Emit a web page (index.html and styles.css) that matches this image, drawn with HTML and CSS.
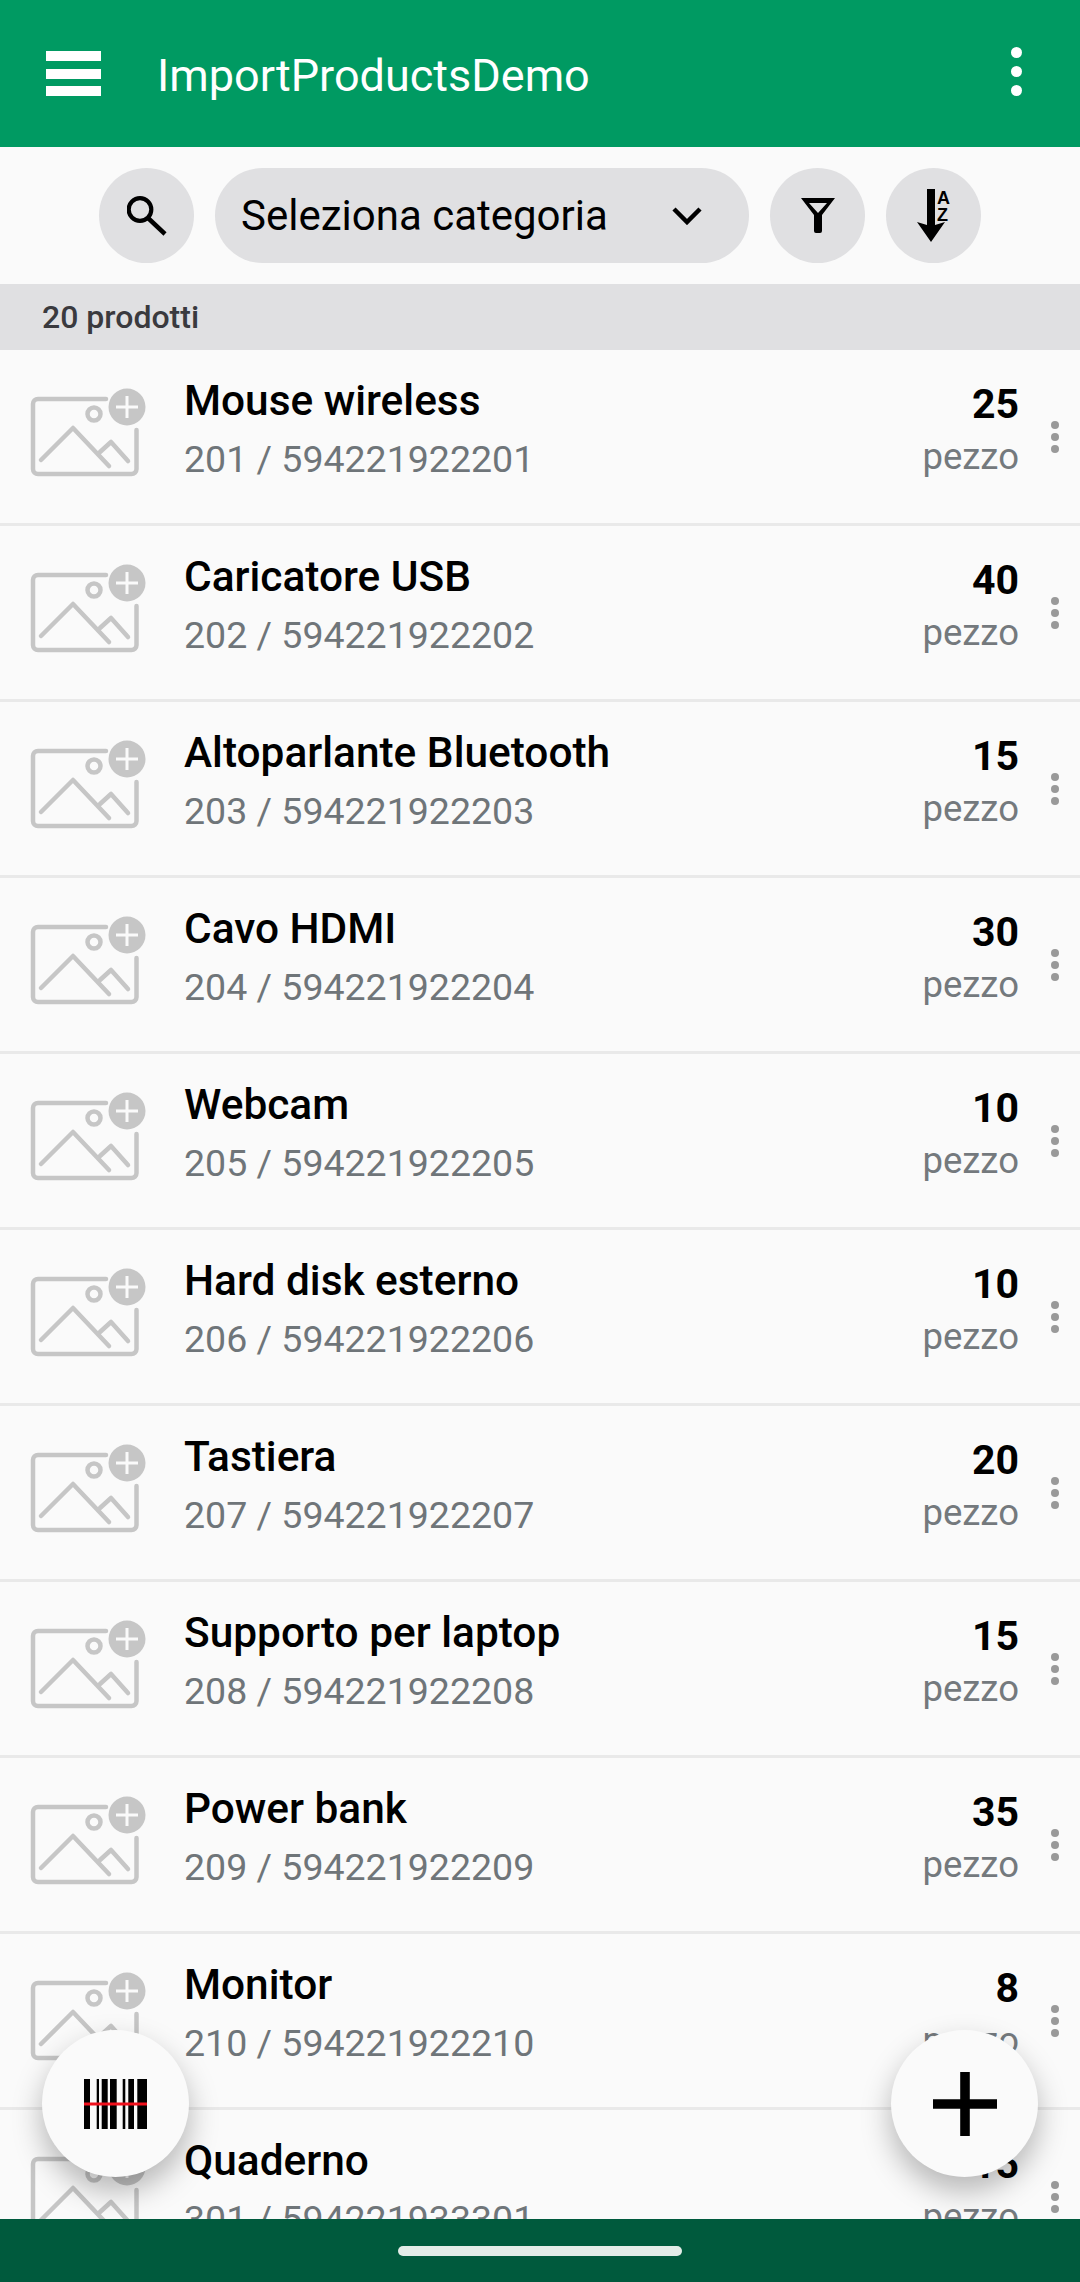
FILE: index.html
```html
<!DOCTYPE html>
<html lang="en">

<head>
    <meta charset="UTF-8">
    <title>ImportProductsDemo</title>
    <link rel="stylesheet" href="styles.css">
</head>

<body>
    <div class="screen">
        <!-- App bar -->
        <header class="appbar">
            <div class="hamburger"><span></span><span></span><span></span></div>
            <div class="app-title">ImportProductsDemo</div>
            <div class="kebab"><span></span><span></span><span></span></div>
        </header>

        <!-- Toolbar -->
        <div class="toolbar">
            <div class="round-btn">
                <svg width="40" height="40" viewBox="0 0 40 40">
                    <circle cx="13" cy="13.5" r="11.3" fill="none" stroke="#000" stroke-width="4.2" />
                    <path d="M21 22L38 38" stroke="#000" stroke-width="4.5" />
                </svg>
            </div>
            <div class="select-pill">
                <span>Seleziona categoria</span>
                <svg width="30" height="18" viewBox="0 0 30 18">
                    <path d="M2 2L15 15L28 2" fill="none" stroke="#000" stroke-width="4.5" />
                </svg>
            </div>
            <div class="round-btn">
                <svg width="36" height="36" viewBox="0 0 36 36">
                    <path d="M1 0H35L22 17V33q0 2-2 2H16q-2 0-2-2V17Z M9 5L18 15L27 5Z" fill="#000" fill-rule="evenodd" />
                </svg>
            </div>
            <div class="round-btn">
                <svg class="sort-icon" width="36" height="54" viewBox="0 0 36 54">
                    <path d="M10 0H18V36L28 33L14 53L0 33L10 36Z" fill="#000" />
                    <text x="20" y="15" class="az">A</text>
                    <text x="20" y="32" class="az">Z</text>
                </svg>
            </div>
        </div>

        <div class="count-bar">20 prodotti</div>

        <!-- Product list -->
        <div class="list">
            <div class="row">
                <svg class="thumb" viewBox="0 0 120 100"><use href="#ph" /></svg>
                <div class="info"><div class="name">Mouse wireless</div><div class="code">201 / 594221922201</div></div>
                <div class="stock"><div class="qty">25</div><div class="unit">pezzo</div></div>
                <div class="dots"><span></span><span></span><span></span></div>
            </div>
            <div class="row">
                <svg class="thumb" viewBox="0 0 120 100"><use href="#ph" /></svg>
                <div class="info"><div class="name">Caricatore USB</div><div class="code">202 / 594221922202</div></div>
                <div class="stock"><div class="qty">40</div><div class="unit">pezzo</div></div>
                <div class="dots"><span></span><span></span><span></span></div>
            </div>
            <div class="row">
                <svg class="thumb" viewBox="0 0 120 100"><use href="#ph" /></svg>
                <div class="info"><div class="name">Altoparlante Bluetooth</div><div class="code">203 / 594221922203</div></div>
                <div class="stock"><div class="qty">15</div><div class="unit">pezzo</div></div>
                <div class="dots"><span></span><span></span><span></span></div>
            </div>
            <div class="row">
                <svg class="thumb" viewBox="0 0 120 100"><use href="#ph" /></svg>
                <div class="info"><div class="name">Cavo HDMI</div><div class="code">204 / 594221922204</div></div>
                <div class="stock"><div class="qty">30</div><div class="unit">pezzo</div></div>
                <div class="dots"><span></span><span></span><span></span></div>
            </div>
            <div class="row">
                <svg class="thumb" viewBox="0 0 120 100"><use href="#ph" /></svg>
                <div class="info"><div class="name">Webcam</div><div class="code">205 / 594221922205</div></div>
                <div class="stock"><div class="qty">10</div><div class="unit">pezzo</div></div>
                <div class="dots"><span></span><span></span><span></span></div>
            </div>
            <div class="row">
                <svg class="thumb" viewBox="0 0 120 100"><use href="#ph" /></svg>
                <div class="info"><div class="name">Hard disk esterno</div><div class="code">206 / 594221922206</div></div>
                <div class="stock"><div class="qty">10</div><div class="unit">pezzo</div></div>
                <div class="dots"><span></span><span></span><span></span></div>
            </div>
            <div class="row">
                <svg class="thumb" viewBox="0 0 120 100"><use href="#ph" /></svg>
                <div class="info"><div class="name">Tastiera</div><div class="code">207 / 594221922207</div></div>
                <div class="stock"><div class="qty">20</div><div class="unit">pezzo</div></div>
                <div class="dots"><span></span><span></span><span></span></div>
            </div>
            <div class="row">
                <svg class="thumb" viewBox="0 0 120 100"><use href="#ph" /></svg>
                <div class="info"><div class="name">Supporto per laptop</div><div class="code">208 / 594221922208</div></div>
                <div class="stock"><div class="qty">15</div><div class="unit">pezzo</div></div>
                <div class="dots"><span></span><span></span><span></span></div>
            </div>
            <div class="row">
                <svg class="thumb" viewBox="0 0 120 100"><use href="#ph" /></svg>
                <div class="info"><div class="name">Power bank</div><div class="code">209 / 594221922209</div></div>
                <div class="stock"><div class="qty">35</div><div class="unit">pezzo</div></div>
                <div class="dots"><span></span><span></span><span></span></div>
            </div>
            <div class="row">
                <svg class="thumb" viewBox="0 0 120 100"><use href="#ph" /></svg>
                <div class="info"><div class="name">Monitor</div><div class="code">210 / 594221922210</div></div>
                <div class="stock"><div class="qty">8</div><div class="unit">pezzo</div></div>
                <div class="dots"><span></span><span></span><span></span></div>
            </div>
            <div class="row">
                <svg class="thumb" viewBox="0 0 120 100"><use href="#ph" /></svg>
                <div class="info"><div class="name">Quaderno</div><div class="code">301 / 594221933301</div></div>
                <div class="stock"><div class="qty">15</div><div class="unit">pezzo</div></div>
                <div class="dots"><span></span><span></span><span></span></div>
            </div>
        </div>

        <!-- Floating buttons -->
        <div class="fab fab-scan">
            <svg width="63" height="50" viewBox="0 0 63 50">
                <path d="M0 0H6V50H0Z M12.7 0H15V50H12.7Z M17.7 0H23.7V50H17.7Z M26 0H32.7V50H26Z M38.7 0H41.3V50H38.7Z M44.3 0H50V50H44.3Z M53.3 0H63V50H53.3Z" fill="#000" />
                <rect x="0" y="23.5" width="63" height="3" fill="#f0101c" />
            </svg>
        </div>
        <div class="fab fab-add">
            <svg width="64" height="64" viewBox="0 0 64 64">
                <path d="M27.2 0H36.8V27.2H64V36.8H36.8V64H27.2V36.8H0V27.2H27.2Z" fill="#000" />
            </svg>
        </div>

        <!-- Navigation bar -->
        <div class="navbar"><div class="home-pill"></div></div>
    </div>

    <!-- Shared image placeholder -->
    <svg class="defs" width="0" height="0">
        <symbol id="ph" viewBox="0 0 120 100">
            <path d="M78 14H10a5 5 0 0 0-5 5V84a5 5 0 0 0 5 5H103.5a5 5 0 0 0 5-5V45" fill="none" stroke="#c6c6c6" stroke-width="4.5" stroke-linecap="round" />
            <path d="M13 75L45 43L81 81M72 67L83 57L100 76" fill="none" stroke="#c6c6c6" stroke-width="4.5" stroke-linecap="round" stroke-linejoin="round" />
            <circle cx="66" cy="29" r="6.5" fill="none" stroke="#c6c6c6" stroke-width="4.5" />
            <circle cx="99" cy="22" r="18.5" fill="#c6c6c6" />
            <path d="M99 11V33M88 22H110" stroke="#fafafa" stroke-width="3" />
        </symbol>
    </svg>
</body>

</html>
```

FILE: styles.css
```css
/* Global Styles */

* {
    box-sizing: border-box;
    margin: 0;
    padding: 0;
}

body {
    font-family: Roboto, sans-serif;
    background-color: #fafafa;
}

.screen {
    position: relative;
    width: 1080px;
    height: 2282px;
    display: flex;
    flex-direction: column;
    overflow: hidden;
}

.defs {
    position: absolute;
}

/* App bar */

.appbar {
    height: 147px;
    flex-shrink: 0;
    background-color: #009a62;
    color: #ffffff;
    display: flex;
    align-items: center;
    padding: 0 58px 4px 46px;
}

.hamburger {
    width: 55px;
    height: 45px;
    margin-top: 4px;
    display: flex;
    flex-direction: column;
    justify-content: space-between;
}

.hamburger span {
    display: block;
    height: 10px;
    background-color: #ffffff;
}

.app-title {
    flex: 1;
    margin-left: 56px;
    padding-top: 8px;
    font-size: 45px;
}

.kebab {
    display: flex;
    flex-direction: column;
    gap: 8px;
}

.kebab span {
    display: block;
    width: 11px;
    height: 11px;
    border-radius: 50%;
    background-color: #ffffff;
}

/* Toolbar */

.toolbar {
    height: 137px;
    flex-shrink: 0;
    display: flex;
    justify-content: center;
    align-items: center;
    gap: 21px;
}

.round-btn {
    width: 95px;
    height: 95px;
    border-radius: 50%;
    background-color: #e0e0e2;
    display: flex;
    align-items: center;
    justify-content: center;
}

.select-pill {
    width: 534px;
    height: 95px;
    border-radius: 48px;
    background-color: #e0e0e2;
    display: flex;
    align-items: center;
    justify-content: space-between;
    padding: 0 47px 0 26px;
    font-size: 42px;
    color: #000000;
}

.sort-icon {
    margin-left: 3px;
}

.az {
    font-family: "Liberation Sans", sans-serif;
    font-size: 18px;
    font-weight: 700;
    fill: #000000;
}

.count-bar {
    height: 66px;
    flex-shrink: 0;
    background-color: #e0e0e2;
    display: flex;
    align-items: center;
    padding-left: 42px;
    font-size: 32px;
    font-weight: 500;
    color: #3a3a3e;
}

/* Product list */

.list {
    flex: 1;
    overflow: hidden;
}

.row {
    height: 176px;
    display: flex;
    align-items: center;
    border-bottom: 3px solid #e9e9e9;
    padding: 0 21px 0 28px;
}

.thumb {
    width: 120px;
    height: 100px;
    margin-top: -3px;
    flex-shrink: 0;
}

.info {
    flex: 1;
    margin-left: 36px;
}

.name {
    font-size: 42.4px;
    font-weight: 500;
    color: #000000;
    margin-top: -16px;
}

.code {
    font-size: 37.5px;
    color: #6f7579;
    margin-top: 12px;
}

.stock {
    text-align: right;
    margin-top: -16px;
}

.qty {
    font-size: 41px;
    font-weight: 700;
    color: #000000;
    margin-bottom: 7px;
}

.unit {
    font-size: 36.5px;
    color: #74797d;
}

.dots {
    margin-left: 32px;
    display: flex;
    flex-direction: column;
    gap: 4px;
}

.dots span {
    display: block;
    width: 8px;
    height: 8px;
    border-radius: 50%;
    background-color: #999999;
}

/* Floating buttons */

.fab {
    position: absolute;
    top: 2030px;
    width: 147px;
    height: 147px;
    border-radius: 50%;
    background-color: #fafafa;
    box-shadow: 0 14px 30px rgba(0, 0, 0, 0.28);
    display: flex;
    align-items: center;
    justify-content: center;
}

.fab-scan {
    left: 42px;
}

.fab-add {
    left: 891px;
}

/* Navigation bar */

.navbar {
    height: 63px;
    flex-shrink: 0;
    background-color: #005a3d;
    display: flex;
    justify-content: center;
    padding-top: 27px;
}

.home-pill {
    width: 284px;
    height: 10px;
    border-radius: 5px;
    background-color: #e3ece8;
}
```
